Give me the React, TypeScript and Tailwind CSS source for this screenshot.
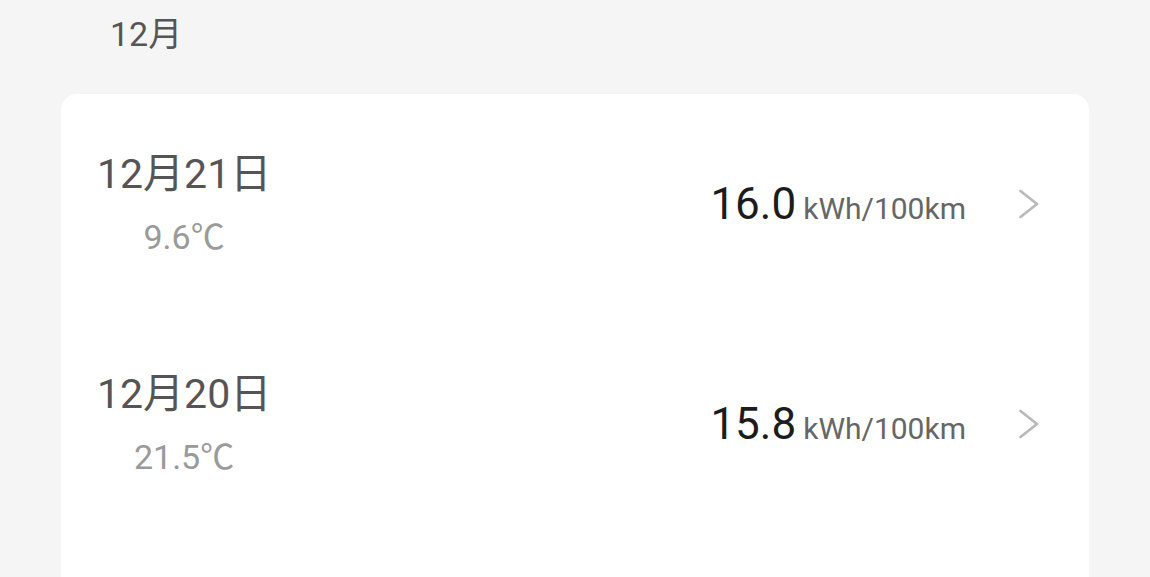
interface Record {
  date: string;
  temp: string;
  value: string;
}

const records: Record[] = [
  { date: '12月21日', temp: '9.6℃', value: '16.0' },
  { date: '12月20日', temp: '21.5℃', value: '15.8' },
];

const font = { fontFamily: 'Roboto, "Noto Sans CJK SC", sans-serif' };

function Chevron() {
  return (
    <svg width="22" height="30" viewBox="0 0 22 30" className="ml-[52px]" fill="none">
      <path d="M2.5 2 L19 15 L2.5 28" stroke="#bababa" strokeWidth="2.8" strokeLinecap="round" strokeLinejoin="round" />
    </svg>
  );
}

function Row({ item }: { item: Record }) {
  return (
    <div className="h-[220px] flex items-center justify-between pl-[36px] pr-[49px]">
      <div className="flex flex-col items-center">
        <div className="text-[41px] leading-none text-[#555555]">{item.date}</div>
        <div className="mt-[25px] text-[34px] leading-none text-[#9a9a9a]">{item.temp}</div>
      </div>
      <div className="flex items-center">
        <div className="flex items-baseline">
          <span className="text-[44px] leading-none text-[#1c1c1c]">{item.value}</span>
          <span className="ml-[7px] text-[30px] leading-none text-[#666666]">kWh/100km</span>
        </div>
        <Chevron />
      </div>
    </div>
  );
}

export default function App() {
  return (
    <div className="h-screen overflow-hidden flex flex-col bg-[#f5f5f5]" style={font}>
      <div className="h-[94px] shrink-0 pl-[110px] pt-[17px]">
        <span className="text-[34px] leading-none text-[#555555]">12月</span>
      </div>
      <div className="mx-[61px] flex-1 bg-white rounded-t-[16px]">
        {records.map((r) => (
          <Row key={r.date} item={r} />
        ))}
      </div>
    </div>
  );
}
